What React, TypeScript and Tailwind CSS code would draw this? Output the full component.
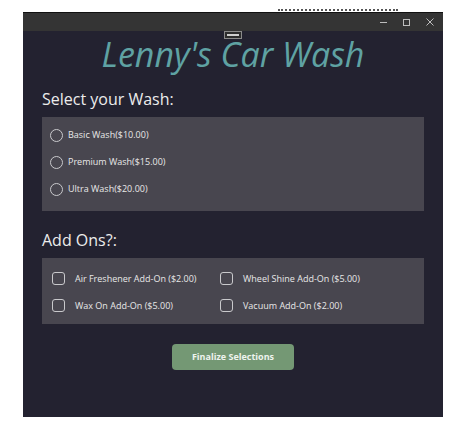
import React from 'react';

const washes = ['Basic Wash($10.00)', 'Premium Wash($15.00)', 'Ultra Wash($20.00)'];
const addOns = [
  'Air Freshener Add-On ($2.00)',
  'Wheel Shine Add-On ($5.00)',
  'Wax On Add-On ($5.00)',
  'Vacuum Add-On ($2.00)',
];

function App() {
  return (
    <div className="relative h-[436px] w-[463px] bg-white font-['Open_Sans',sans-serif]">
      {/* stray bits above the window */}
      <div className="absolute left-[278px] top-[9px] h-[3px] w-[120px] border-t-2 border-dotted border-[#555]" />

      <div className="absolute left-[23px] top-[12px] flex h-[405px] w-[420px] flex-col">
        {/* Title bar */}
        <div className="flex h-[19px] items-center justify-end border-t border-[#111] bg-[#343434] pr-[9px] text-[#bdbdbd]">
          <div className="flex items-center gap-[16px]">
            <div className="h-px w-[7px] bg-[#bdbdbd]" />
            <div className="h-[7px] w-[7px] border border-[#bdbdbd]" />
            <svg width="8" height="8" viewBox="0 0 8 8" stroke="#bdbdbd" strokeWidth="1">
              <path d="M0.5 0.5 L7.5 7.5 M7.5 0.5 L0.5 7.5" />
            </svg>
          </div>
        </div>

        {/* Body */}
        <div className="relative flex flex-1 flex-col bg-[#232230] px-[19px]">
          <div className="absolute left-[201px] top-0 flex h-[8px] w-[18px] items-center justify-center border border-[#8a8a8a] bg-[#2c2c2c]">
            <div className="h-[2px] w-[12px] bg-[#cfcfcf]" />
          </div>

          <h1 className="mt-[1px] text-center text-[34px] italic leading-[44px] text-[#5fa2a3]">
            Lenny&apos;s Car Wash
          </h1>

          <h2 className="mt-[11px] text-[16px] leading-[24px] text-[#ececec]">Select your Wash:</h2>
          <div className="mt-[6px] flex h-[94px] flex-col gap-[13px] bg-[#48464f] pl-[8px] pt-[11px]">
            {washes.map((w) => (
              <label key={w} className="flex h-[14px] items-center gap-[5px] text-[9px] text-[#e8e8e8]">
                <span className="h-[13px] w-[13px] rounded-full border border-[#c9c9cc]" />
                {w}
              </label>
            ))}
          </div>

          <h2 className="mt-[17px] text-[16px] leading-[24px] text-[#ececec]">Add Ons?:</h2>
          <div className="mt-[6px] grid h-[66px] grid-cols-[168px_1fr] content-start gap-y-[14px] bg-[#48464f] pl-[10px] pt-[14px]">
            {addOns.map((a) => (
              <label key={a} className="flex h-[13px] items-center gap-[10px] text-[9px] text-[#e8e8e8]">
                <span className="h-[13px] w-[13px] rounded-[3px] border border-[#c9c9cc]" />
                {a}
              </label>
            ))}
          </div>

          <div className="mt-[20px] flex justify-center">
            <button className="h-[26px] w-[122px] rounded-[4px] bg-[#749874] text-[9px] font-bold text-[#eef3ee]">
              Finalize Selections
            </button>
          </div>
        </div>
      </div>
    </div>
  );
}

export default App;
